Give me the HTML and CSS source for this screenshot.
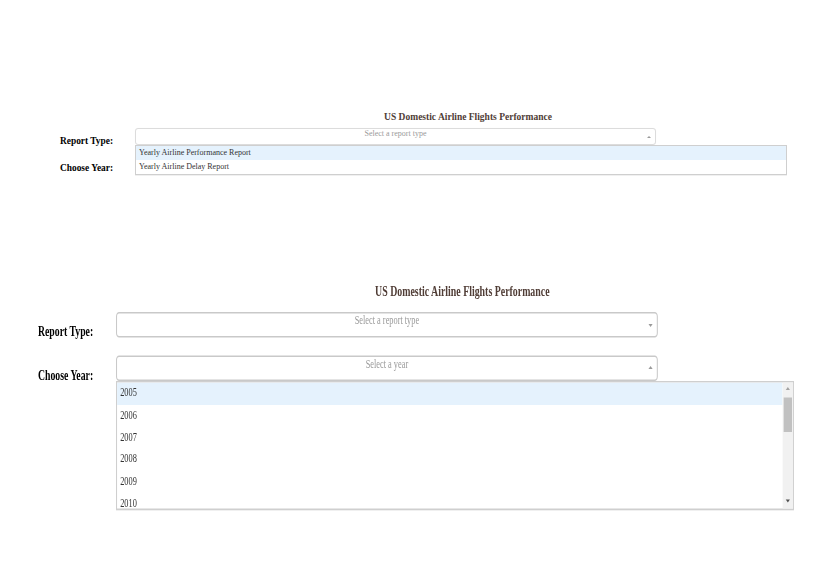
FILE: index.html
```html
<!DOCTYPE html>
<html lang="en">
<head>
<meta charset="utf-8">
<title>US Domestic Airline Flights Performance</title>
<link rel="stylesheet" href="styles.css">
</head>
<body>
<section class="panel panel--top">
  <h1 class="title">US Domestic Airline Flights Performance</h1>
  <div class="rows">
    <div class="row">
      <div class="label">Report Type:</div>
      <div class="field">
        <div class="select is-open">
          <span class="placeholder">Select a report type</span>
          <span class="arrow arrow--up"></span>
        </div>
        <ul class="menu">
          <li class="option is-focused">Yearly Airline Performance Report</li>
          <li class="option">Yearly Airline Delay Report</li>
        </ul>
      </div>
    </div>
    <div class="row">
      <div class="label">Choose Year:</div>
      <div class="field">
        <div class="select">
          <span class="placeholder">Select a year</span>
          <span class="arrow arrow--down"></span>
        </div>
      </div>
    </div>
  </div>
</section>

<section class="panel panel--zoomed">
  <h1 class="title">US Domestic Airline Flights Performance</h1>
  <div class="rows">
    <div class="row">
      <div class="label">Report Type:</div>
      <div class="field">
        <div class="select">
          <span class="placeholder">Select a report type</span>
          <span class="arrow arrow--down"></span>
        </div>
      </div>
    </div>
    <div class="row">
      <div class="label">Choose Year:</div>
      <div class="field">
        <div class="select is-open">
          <span class="placeholder">Select a year</span>
          <span class="arrow arrow--up"></span>
        </div>
        <div class="menu menu--years">
          <ul class="options">
            <li class="option is-focused">2005</li>
            <li class="option">2006</li>
            <li class="option">2007</li>
            <li class="option">2008</li>
            <li class="option">2009</li>
            <li class="option">2010</li>
          </ul>
          <div class="scrollbar">
            <span class="sb-btn"><span class="sb-arrow sb-arrow--up"></span></span>
            <span class="sb-thumb"></span>
            <span class="sb-track"></span>
            <span class="sb-btn"><span class="sb-arrow sb-arrow--down"></span></span>
          </div>
        </div>
      </div>
    </div>
  </div>
</section>
</body>
</html>
```

FILE: styles.css
```css
* {
  box-sizing: border-box;
}

html,
body {
  margin: 0;
  padding: 0;
  width: 832px;
  height: 564px;
  overflow: hidden;
  background: #ffffff;
}

body {
  font-family: "Liberation Serif", "Times New Roman", serif;
}

.panel {
  width: 832px;
  padding-left: 60px;
}

.panel--top {
  height: 270px;
  padding-top: 111.5px;
}

.panel--zoomed {
  padding-top: 9.1px;
  transform: scale(1.04, 1.5);
  transform-origin: 610px 0;
}

.title {
  margin: 0;
  padding-left: 44px;
  text-align: center;
  font-size: 9.5px;
  line-height: 11px;
  font-weight: bold;
  color: #503d36;
}

.panel--top .title {
  margin-bottom: 5.5px;
}

.panel--zoomed .title {
  margin-bottom: 7.9px;
}

.rows {
  display: flex;
  flex-direction: column;
  gap: 10px;
}

.panel--zoomed .rows {
  gap: 11.4px;
}

.row {
  display: flex;
  align-items: flex-start;
  height: 17px;
}

.panel--zoomed .row {
  height: 17.3px;
}

.label {
  width: 75px;
  padding-top: 8px;
  font-size: 9.4px;
  line-height: 11px;
  font-weight: bold;
  color: #000000;
  white-space: nowrap;
}

.field {
  position: relative;
  width: 521px;
}

.select {
  height: 17px;
  border: 1px solid #dcdcdc;
  border-radius: 3px;
  background: #ffffff;
  display: grid;
  grid-template-columns: 12px 1fr 12px;
  font-size: 8px;
}

.panel--top .select {
  box-shadow: 0 0 1px rgba(0, 0, 0, 0.06);
}

.panel--zoomed .select {
  height: 17.3px;
  border-color: #c9c9c9;
}

.placeholder {
  grid-column: 2;
  text-align: center;
  color: #9a9a9a;
  line-height: 10px;
  white-space: nowrap;
}

.arrow {
  grid-column: 3;
  align-self: center;
  justify-self: center;
  width: 0;
  height: 0;
  border-left: 2.5px solid transparent;
  border-right: 2.5px solid transparent;
}

.arrow--up {
  border-bottom: 2.5px solid #9a9a9a;
}

.arrow--down {
  border-top: 2.5px solid #9a9a9a;
}

.menu {
  position: absolute;
  top: 100%;
  left: 0;
  z-index: 10;
  width: 652px;
  margin: 0;
  padding: 0;
  list-style: none;
  background: #ffffff;
  border: 1px solid #cfcfcf;
  box-shadow: 0 1px 0 rgba(0, 0, 0, 0.06);
  font-size: 8px;
}

.option {
  padding-left: 3px;
  line-height: 14px;
  color: #333333;
  white-space: nowrap;
}

.option.is-focused {
  background: #e5f2fd;
}

.menu--years {
  height: 86px;
  display: flex;
}

.options {
  flex: 1;
  margin: 0;
  padding: 0;
  list-style: none;
  overflow: hidden;
}

.menu--years .option {
  line-height: 14.8px;
}

.scrollbar {
  width: 10.5px;
  background: #f1f1f1;
  display: flex;
  flex-direction: column;
  align-items: center;
}

.sb-btn {
  height: 9px;
  width: 100%;
  display: flex;
  align-items: center;
  justify-content: center;
}

.sb-arrow {
  width: 0;
  height: 0;
  border-left: 2.2px solid transparent;
  border-right: 2.2px solid transparent;
}

.sb-arrow--up {
  border-bottom: 2.5px solid #a3a3a3;
}

.sb-arrow--down {
  border-top: 2.5px solid #505050;
}

.sb-thumb {
  margin-top: 1.3px;
  width: 8px;
  height: 22.7px;
  background: #c1c1c1;
}

.sb-track {
  flex: 1;
}
```
